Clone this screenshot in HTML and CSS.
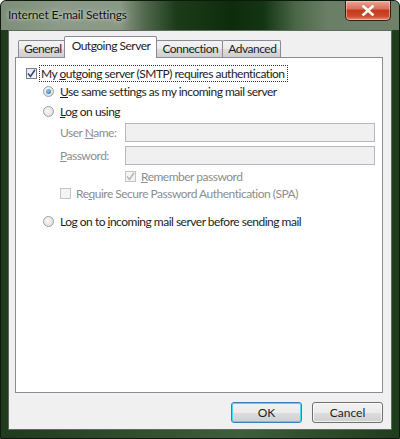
FILE: index.html
```html
<!DOCTYPE html>
<html>
<head>
<meta charset="utf-8">
<link rel="stylesheet" href="styles.css">
</head>
<body>
<div class="window">
  <div class="titlebar">
    <div class="title">Internet E-mail Settings</div>
    <div class="close">
      <svg width="14" height="11" viewBox="0 0 14 11"><path d="M2.5 1.5 L11.5 9.5 M11.5 1.5 L2.5 9.5" stroke="#fff" stroke-width="2.6" stroke-linecap="square"/></svg>
    </div>
  </div>
  <div class="client">
    <div class="tabs">
      <div class="tab">General</div>
      <div class="tab active">Outgoing Server</div>
      <div class="tab">Connection</div>
      <div class="tab">Advanced</div>
    </div>
    <div class="panel">
      <div class="row main">
        <span class="cb checked"><svg width="9" height="9" viewBox="0 0 9 9"><path d="M1 4.5 L3.5 7.5 L8 0.8" fill="none" stroke="#3b4b7a" stroke-width="1.6"/></svg></span>
        <span class="focus">My <u>o</u>utgoing server (SMTP) requires authentication</span>
      </div>
      <div class="row radio-row r1">
        <span class="radio on"></span><span><u>U</u>se same settings as my incoming mail server</span>
      </div>
      <div class="row radio-row r2">
        <span class="radio"></span><span><u>L</u>og on using</span>
      </div>
      <div class="field f1">
        <span class="lbl">User <u>N</u>ame:</span><span class="input"></span>
      </div>
      <div class="field f2">
        <span class="lbl"><u>P</u>assword:</span><span class="input"></span>
      </div>
      <div class="row remember">
        <span class="cb disabled"><svg width="9" height="9" viewBox="0 0 9 9"><path d="M1 4.5 L3.5 7.5 L8 0.8" fill="none" stroke="#b8b8b8" stroke-width="1.6"/></svg></span>
        <span class="dis"><u>R</u>emember password</span>
      </div>
      <div class="row spa">
        <span class="cb disabled"></span>
        <span class="dis">Re<u>q</u>uire Secure Password Authentication (SPA)</span>
      </div>
      <div class="row radio-row r3">
        <span class="radio"></span><span>Log on to <u>i</u>ncoming mail server before sending mail</span>
      </div>
    </div>
    <div class="buttons">
      <button class="btn default">OK</button>
      <button class="btn">Cancel</button>
    </div>
  </div>
</div>
</body>
</html>
```
FILE: styles.css
```css
html, body {
  margin: 0;
  padding: 0;
}
body {
  width: 400px;
  height: 439px;
  overflow: hidden;
  font-family: Lato, "Noto Sans", sans-serif;
  font-size: 12px;
  letter-spacing: -0.5px;
  color: #1e1e1e;
}
.window {
  width: 400px;
  height: 439px;
  box-sizing: border-box;
  border: 1px solid #0f1a0e;
  border-radius: 6px 6px 0 0;
  background: linear-gradient(90deg, #1f3a1c 0%, #3f5e3b 60%, #1f3d1c 100%);
  display: flex;
  flex-direction: column;
  overflow: hidden;
}
.titlebar {
  height: 29px;
  display: flex;
  justify-content: space-between;
  align-items: flex-start;
  padding-left: 7px;
  padding-right: 8px;
  background: linear-gradient(90deg, #7d8d79 0%, #8d9a89 15%, #8a9886 30%, #52694e 36%, #1c3c19 44%, #0d2c0c 58%, #143514 66%, #4a6746 74%, #6b7f67 82%, #6f816b 100%);
}
.title {
  margin-top: 6px;
  font-size: 12px;
  letter-spacing: -0.2px;
  color: #111;
  text-shadow: 0 0 6px rgba(220,230,215,0.8), 0 0 3px rgba(220,230,215,0.8);
}
.close {
  width: 46px;
  height: 20px;
  box-sizing: border-box;
  border: 1px solid #3a1a14;
  border-top: none;
  border-radius: 0 0 5px 5px;
  background: linear-gradient(180deg, #eaa596 0%, #d8735e 40%, #c6391a 50%, #cc4a2c 80%, #e2927c 100%);
  box-shadow: inset 0 0 0 1px rgba(255,220,210,0.5);
  display: flex;
  align-items: center;
  justify-content: center;
}
.client {
  flex: 1;
  margin: 0 7px 8px 7px;
  background: #f0f0f0;
  border: 1px solid #5d6a5c;
  display: flex;
  flex-direction: column;
  padding: 6px 8px 0 6px;
}
.tabs {
  display: flex;
  align-items: flex-end;
  height: 20px;
  padding-left: 3px;
  position: relative;
  z-index: 1;
}
.tab {
  height: 16px;
  line-height: 16px;
  padding: 0 4px 0 5px;
  border: 1px solid #898c95;
  border-bottom: none;
  margin-right: -1px;
  background: linear-gradient(180deg, #f3f3f3 0%, #ebebeb 50%, #dcdcdc 51%, #cfcfcf 100%);
  border-radius: 2px 2px 0 0;
  color: #1e1e1e;
}
.tab.active {
  background: #fff;
  padding: 0 6px 0 7px;
  margin: 0 -1px -1px -2px;
  position: relative;
  z-index: 2;
  height: 21px;
  line-height: 17px;
}
.panel {
  height: 336px;
  box-sizing: border-box;
  background: #fff;
  border: 1px solid #898c95;
  position: relative;
  padding: 8px 0 0 10px;
}
.row {
  display: flex;
  align-items: center;
  white-space: nowrap;
}
.cb {
  width: 11px;
  height: 11px;
  box-sizing: border-box;
  border: 1px solid #8e8f8f;
  background: linear-gradient(135deg, #dcdcdc, #f7f7f7);
  display: inline-flex;
  align-items: center;
  justify-content: center;
  flex: none;
}
.cb.checked {
  border-color: #7a7e8a;
  background: linear-gradient(135deg, #e4e8f0, #fafbfd);
}
.cb.disabled {
  border-color: #c4c4c4;
  background: #f4f4f4;
}
.main {
  height: 15px;
}
.main .cb {
  margin-right: 3px;
}
.focus {
  outline: 1px dotted #333;
  outline-offset: 0px;
  padding: 0 2px 0 1px;
  line-height: 15px;
}
.radio-row .radio {
  margin-right: 6px;
}
.radio {
  width: 11px;
  height: 11px;
  box-sizing: border-box;
  border-radius: 50%;
  border: 1px solid #a0a0a0;
  background: radial-gradient(circle at 40% 40%, #f8f8f8, #d8d8d8);
  flex: none;
  position: relative;
}
.radio.on::after {
  content: "";
  position: absolute;
  left: 2px;
  top: 2px;
  width: 5px;
  height: 5px;
  border-radius: 50%;
  background: radial-gradient(circle at 40% 35%, #8fcfee, #1b6fa8);
}
.r1 {
  margin: 2px 0 0 17px;
  height: 16px;
}
.r2 {
  margin: 4px 0 0 17px;
  height: 16px;
}
.field {
  display: flex;
  align-items: center;
  margin-left: 34px;
  height: 20px;
  white-space: nowrap;
}
.f1 {
  margin-top: 3px;
}
.f2 {
  margin-top: 3px;
}
.lbl {
  width: 65px;
  flex: none;
  color: #8d8d8d;
}
.input {
  width: 250px;
  height: 19px;
  box-sizing: border-box;
  border: 1px solid #b3b8c4;
  background: #f0f0f0;
}
.dis {
  color: #8d8d8d;
}
.remember {
  margin: 3px 0 0 99px;
  height: 16px;
}
.remember .cb {
  margin-right: 5px;
}
.spa {
  margin: 1px 0 0 34px;
  height: 16px;
}
.spa .cb {
  margin-right: 5px;
}
.r3 {
  margin: 12px 0 0 17px;
  height: 16px;
}
.buttons {
  display: flex;
  justify-content: flex-end;
  gap: 10px;
  margin-top: 9px;
}
.btn {
  width: 71px;
  height: 21px;
  box-sizing: border-box;
  font-family: inherit;
  font-size: 12px;
  letter-spacing: 0;
  color: #1e1e1e;
  border: 1px solid #707070;
  border-radius: 3px;
  background: linear-gradient(180deg, #f2f2f2 0%, #ebebeb 50%, #dddddd 51%, #cfcfcf 100%);
  box-shadow: inset 0 0 0 1px rgba(255,255,255,0.7);
  padding: 0;
  line-height: 18px;
}
.btn.default {
  border-color: #3c7fb1;
  box-shadow: inset 0 0 0 1px #48d8fb;
}
```
